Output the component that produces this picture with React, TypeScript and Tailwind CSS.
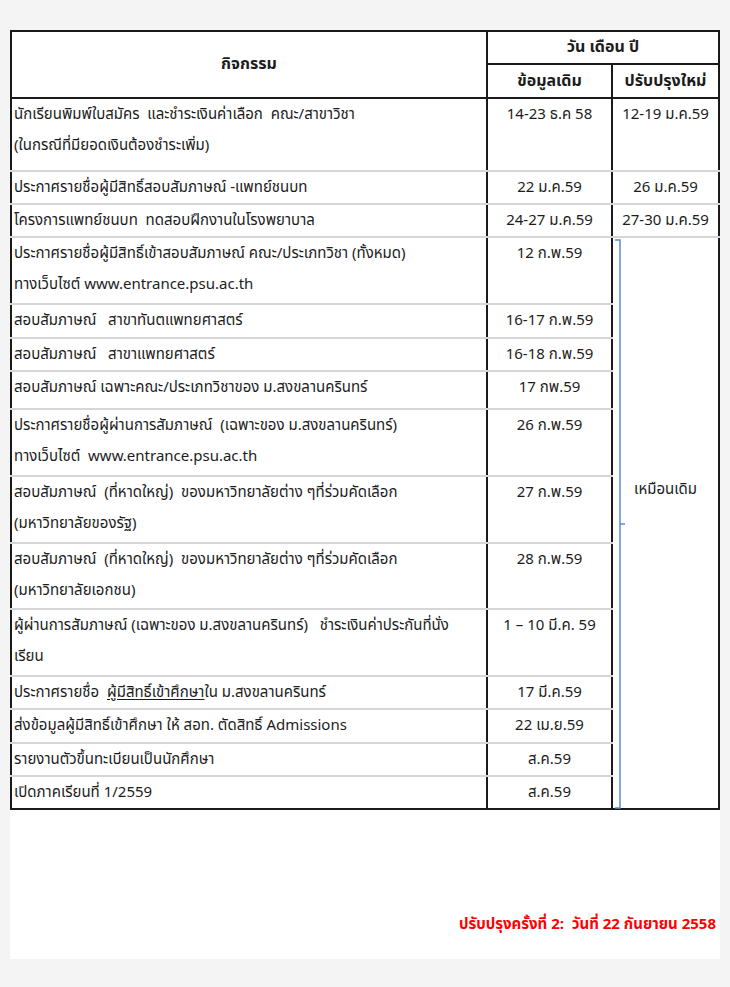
import React from "react";

type Row = {
  lines: React.ReactNode[];
  old: string;
  next?: string;
  h: string;
};

const rows: Row[] = [
  {
    lines: ["นักเรียนพิมพ์ใบสมัคร  และชำระเงินค่าเลือก  คณะ/สาขาวิชา", "(ในกรณีที่มียอดเงินต้องชำระเพิ่ม)"],
    old: "14-23 ธ.ค 58",
    next: "12-19 ม.ค.59",
    h: "h-[73px]",
  },
  { lines: ["ประกาศรายชื่อผู้มีสิทธิ์สอบสัมภาษณ์ -แพทย์ชนบท"], old: "22 ม.ค.59", next: "26 ม.ค.59", h: "h-[33px]" },
  { lines: ["โครงการแพทย์ชนบท  ทดสอบฝึกงานในโรงพยาบาล"], old: "24-27 ม.ค.59", next: "27-30 ม.ค.59", h: "h-[33px]" },
  {
    lines: ["ประกาศรายชื่อผู้มีสิทธิ์เข้าสอบสัมภาษณ์ คณะ/ประเภทวิชา (ทั้งหมด)", "ทางเว็บไซต์ www.entrance.psu.ac.th"],
    old: "12 ก.พ.59",
    h: "h-[67px]",
  },
  { lines: ["สอบสัมภาษณ์   สาขาทันตแพทยศาสตร์"], old: "16-17 ก.พ.59", h: "h-[34px]" },
  { lines: ["สอบสัมภาษณ์   สาขาแพทยศาสตร์"], old: "16-18 ก.พ.59", h: "h-[33px]" },
  { lines: ["สอบสัมภาษณ์ เฉพาะคณะ/ประเภทวิชาของ ม.สงขลานครินทร์"], old: "17 กพ.59", h: "h-[38px]" },
  {
    lines: ["ประกาศรายชื่อผู้ผ่านการสัมภาษณ์  (เฉพาะของ ม.สงขลานครินทร์)", "ทางเว็บไซต์  www.entrance.psu.ac.th"],
    old: "26 ก.พ.59",
    h: "h-[67px]",
  },
  {
    lines: ["สอบสัมภาษณ์  (ที่หาดใหญ่)  ของมหาวิทยาลัยต่าง ๆที่ร่วมคัดเลือก", "(มหาวิทยาลัยของรัฐ)"],
    old: "27 ก.พ.59",
    h: "h-[67px]",
  },
  {
    lines: ["สอบสัมภาษณ์  (ที่หาดใหญ่)  ของมหาวิทยาลัยต่าง ๆที่ร่วมคัดเลือก", "(มหาวิทยาลัยเอกชน)"],
    old: "28 ก.พ.59",
    h: "h-[66px]",
  },
  {
    lines: ["ผู้ผ่านการสัมภาษณ์ (เฉพาะของ ม.สงขลานครินทร์)   ชำระเงินค่าประกันที่นั่ง", "เรียน"],
    old: "1 – 10 มี.ค. 59",
    h: "h-[67px]",
  },
  {
    lines: [
      <>
        ประกาศรายชื่อ  <span className="underline underline-offset-2">ผู้มีสิทธิ์เข้าศึกษา</span>ใน ม.สงขลานครินทร์
      </>,
    ],
    old: "17 มี.ค.59",
    h: "h-[33px]",
  },
  { lines: ["ส่งข้อมูลผู้มีสิทธิ์เข้าศึกษา ให้ สอท. ตัดสิทธิ์ Admissions"], old: "22 เม.ย.59", h: "h-[34px]" },
  { lines: ["รายงานตัวขึ้นทะเบียนเป็นนักศึกษา"], old: "ส.ค.59", h: "h-[33px]" },
  { lines: ["เปิดภาคเรียนที่ 1/2559"], old: "ส.ค.59", h: "h-[33px]" },
];

const font = "font-['Tahoma','Leelawadee_UI','Noto_Sans_Thai','Loma','Noto_Sans',sans-serif]";

export default function App() {
  return (
    <div className={`min-h-[987px] bg-[#f4f4f4] px-[10px] pt-[30px] ${font}`}>
      <div className="bg-white pb-[22px]">
        <table className="w-full table-fixed border-collapse border-2 border-[#1a1a1a] text-[15px] leading-[31px] text-[#1c1c1c]">
          <colgroup>
            <col className="w-[476px]" />
            <col className="w-[125px]" />
            <col />
          </colgroup>
          <thead>
            <tr className="h-[33px]">
              <th rowSpan={2} className="border-2 border-[#1a1a1a] text-center align-middle text-[16px] font-bold">
                กิจกรรม
              </th>
              <th colSpan={2} className="border-2 border-[#1a1a1a] text-center align-middle text-[16px] font-bold">
                วัน เดือน ปี
              </th>
            </tr>
            <tr className="h-[34px]">
              <th className="border-2 border-[#1a1a1a] text-center align-middle text-[16px] font-bold">ข้อมูลเดิม</th>
              <th className="border-2 border-[#1a1a1a] text-center align-middle text-[16px] font-bold">ปรับปรุงใหม่</th>
            </tr>
          </thead>
          <tbody>
            {rows.map((r, i) => {
              const last = i === rows.length - 1;
              const bottom = last ? "border-b-[#1a1a1a]" : "border-b-[#d6d6d6]";
              return (
                <tr key={i} className={r.h}>
                  <td
                    className={`border-y-2 border-r-2 border-t-[#d6d6d6] ${bottom} border-r-[#1a1a1a] px-[2px] align-top whitespace-pre`}
                  >
                    {r.lines.map((l, j) => (
                      <div key={j}>{l}</div>
                    ))}
                  </td>
                  <td className={`border-y-2 border-r-2 border-t-[#d6d6d6] ${bottom} border-r-[#1a1a1a] text-center align-top`}>
                    {r.old}
                  </td>
                  {r.next && <td className="border-y-2 border-y-[#d6d6d6] text-center align-top">{r.next}</td>}
                  {i === 3 && (
                    <td rowSpan={12} className="relative border-b-2 border-b-[#1a1a1a] pt-[236px] text-center align-top">
                      <svg
                        className="absolute left-[1px] top-[1px]"
                        width="14"
                        height="572"
                        viewBox="0 0 14 572"
                        fill="none"
                        stroke="#5a8bd3"
                        strokeWidth="1.5"
                      >
                        <path d="M1 1 H6 V285 H11 M6 285 V569 H1" />
                      </svg>
                      เหมือนเดิม
                    </td>
                  )}
                </tr>
              );
            })}
          </tbody>
        </table>
        <div className="mt-[103px] whitespace-pre pr-1 text-right text-[15px] font-bold leading-[24px] text-[#ff0000]">
          ปรับปรุงครั้งที่ 2:  วันที่ 22 กันยายน 2558
        </div>
      </div>
    </div>
  );
}
